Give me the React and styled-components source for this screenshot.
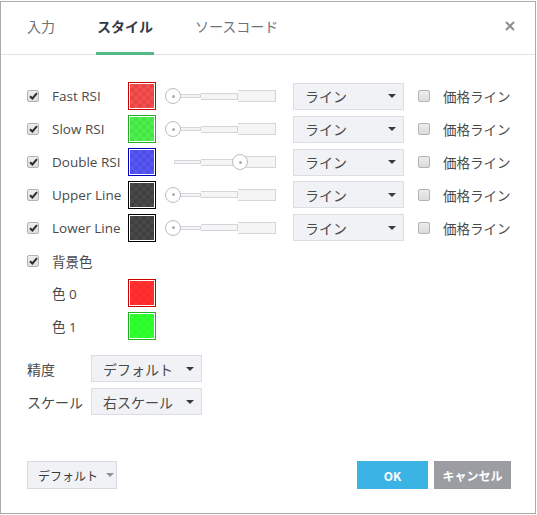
import React from "react";
import styled, { createGlobalStyle } from "styled-components";

const Global = createGlobalStyle`
  html, body { margin: 0; padding: 0; background: #fff; }
  body { font-family: "Open Sans", "Noto Sans CJK JP", sans-serif; }
  * { box-sizing: border-box; }
`;

const Dialog = styled.div`
  margin-top: 1px;
  width: 536px;
  height: 513px;
  border: 1px solid #ababab;
  background: #fff;
  display: flex;
  flex-direction: column;
  color: #4a4a4a;
`;

const Header = styled.div`
  height: 53px;
  border-bottom: 1px solid #e1e3e8;
  display: flex;
  align-items: stretch;
  padding-left: 25px;
  padding-right: 18px;
  gap: 40px;
`;

const Tab = styled.div`
  position: relative;
  display: flex;
  align-items: center;
  font-family: "Noto Sans CJK JP", sans-serif;
  font-size: 14px;
  font-weight: ${(p) => (p.$active ? 700 : 400)};
  color: ${(p) => (p.$active ? "#353845" : "#6e717a")};
  padding: 0 1px 3px;
  border-bottom: 3px solid ${(p) => (p.$active ? "#53b987" : "transparent")};
  margin-bottom: -1px;
`;

const Close = styled.div`
  margin-left: auto;
  display: flex;
  align-items: center;
  padding-bottom: 4px;
  padding-right: 2px;
`;

const Body = styled.div`
  padding: 25px 0 0 26px;
  display: flex;
  flex-direction: column;
`;

const Row = styled.div`
  height: 32.85px;
  display: flex;
  align-items: center;
`;

const CheckBox = styled.div`
  width: 12px;
  height: 12px;
  border: 1px solid #b3b3b3;
  border-radius: 2px;
  background: linear-gradient(#eeeeee, #dedede);
  display: flex;
  align-items: center;
  justify-content: center;
  flex: none;
`;

const Label = styled.div`
  font-size: 13.5px;
  color: #4a4a4a;
  width: ${(p) => p.$w || 76}px;
  margin-left: ${(p) => p.$ml ?? 13}px;
  white-space: nowrap;
  flex: none;
`;

const Swatch = styled.div`
  width: 28px;
  height: 28px;
  border: 1.5px solid ${(p) => p.$border};
  padding: 1px;
  background: #fff;
  flex: none;
  div {
    width: 100%;
    height: 100%;
    background-image: linear-gradient(${(p) => p.$fill}, ${(p) => p.$fill}),
      conic-gradient(#c8c8c8 25%, #ffffff 0 50%, #c8c8c8 0 75%, #ffffff 0);
    background-size: 100% 100%, 8px 8px;
  }
`;

const Slider = styled.div`
  position: relative;
  width: 111px;
  height: 16px;
  margin-left: 9px;
  padding-left: 9px;
  display: flex;
  align-items: center;
  flex: none;
`;

const Seg = styled.div`
  height: ${(p) => p.$h}px;
  width: ${(p) => (p.$w ? `${p.$w}px` : "auto")};
  flex: ${(p) => (p.$w ? "none" : "1")};
  background: #f5f5f6;
  border: 1px solid #d2d5da;
  border-left: ${(p) => (p.$first ? "1px solid #d2d5da" : "none")};
`;

const Thumb = styled.div`
  position: absolute;
  top: 0;
  width: 16px;
  height: 16px;
  border-radius: 50%;
  border: 1px solid #b9bcc4;
  background: #fff;
  display: flex;
  align-items: center;
  justify-content: center;
  &::after {
    content: "";
    width: 3px;
    height: 3px;
    border-radius: 50%;
    background: #a9adb6;
  }
`;

const Select = styled.div`
  width: ${(p) => p.$w || 111}px;
  height: 27px;
  margin-left: ${(p) => p.$ml ?? 17}px;
  background: #f1f2f6;
  border: 1px solid #dcdee3;
  display: flex;
  align-items: center;
  padding: 0 7px 0 11px;
  font-family: "Noto Sans CJK JP", sans-serif;
  font-size: 14px;
  color: #4a4a4a;
  flex: none;
  span { flex: 1; }
`;

const Arrow = styled.i`
  width: 0;
  height: 0;
  border-left: 4px solid transparent;
  border-right: 4px solid transparent;
  border-top: 4px solid ${(p) => p.$c || "#3a3a3a"};
`;

const PriceCheck = styled(CheckBox)`
  margin-left: 14px;
  background: linear-gradient(#ececec, #dcdcdc);
`;

const PriceLabel = styled.div`
  margin-left: 13px;
  font-family: "Noto Sans CJK JP", sans-serif;
  font-size: 13.5px;
  color: #4a4a4a;
  white-space: nowrap;
`;

const Indent = styled.div`
  width: 12px;
  flex: none;
`;

const Options = styled.div`
  margin-top: 13px;
  display: flex;
  flex-direction: column;
  gap: 7px;
`;

const OptRow = styled.div`
  display: flex;
  align-items: center;
  height: 26px;
`;

const OptLabel = styled.div`
  width: 64px;
  font-family: "Noto Sans CJK JP", sans-serif;
  font-size: 14px;
  color: #4a4a4a;
  flex: none;
`;

const Footer = styled.div`
  margin-top: auto;
  display: flex;
  align-items: center;
  padding: 0 24px 24px 26px;
  gap: 6px;
`;

const Button = styled.div`
  height: 28px;
  width: ${(p) => p.$w}px;
  display: flex;
  align-items: center;
  justify-content: center;
  font-family: "Noto Sans CJK JP", sans-serif;
  font-size: 12px;
  font-weight: 700;
  color: #fff;
  background: ${(p) => p.$bg};
`;

const DefaultButton = styled.div`
  height: 28px;
  width: 90px;
  display: flex;
  align-items: center;
  gap: 8px;
  padding-left: 10px;
  background: #f1f2f6;
  border: 1px solid #d7d9de;
  font-family: "Noto Sans CJK JP", sans-serif;
  font-size: 12px;
  color: #3a3a3a;
  margin-right: auto;
`;

const Check = () => (
  <svg width="9" height="8" viewBox="0 0 9 8">
    <path d="M1 4.2 L3.4 6.5 L8 1.2" fill="none" stroke="#2e2e2e" strokeWidth="2" />
  </svg>
);

const rows = [
  { name: "Fast RSI", border: "#cc0000", fill: "rgba(240,40,40,0.82)", thumb: 0 },
  { name: "Slow RSI", border: "#22b022", fill: "rgba(40,235,40,0.82)", thumb: 0 },
  { name: "Double RSI", border: "#0000c0", fill: "rgba(50,50,240,0.82)", thumb: 67 },
  { name: "Upper Line", border: "#000", fill: "rgba(40,40,40,0.85)", thumb: 0 },
  { name: "Lower Line", border: "#000", fill: "rgba(40,40,40,0.85)", thumb: 0 },
];

export default function App() {
  return (
    <>
      <Global />
      <Dialog>
        <Header>
          <Tab>入力</Tab>
          <Tab $active>スタイル</Tab>
          <Tab>ソースコード</Tab>
          <Close>
            <svg width="10" height="10" viewBox="0 0 10 10">
              <path d="M1 1 L9 9 M9 1 L1 9" stroke="#8d8f96" strokeWidth="2" />
            </svg>
          </Close>
        </Header>
        <Body>
          {rows.map((r) => (
            <Row key={r.name}>
              <CheckBox><Check /></CheckBox>
              <Label>{r.name}</Label>
              <Swatch $border={r.border} $fill={r.fill}><div /></Swatch>
              <Slider>
                <Seg $first $w={27} $h={4} />
                <Seg $w={37} $h={7} />
                <Seg $h={12} />
                <Thumb style={{ left: r.thumb }} />
              </Slider>
              <Select>
                <span>ライン</span>
                <Arrow />
              </Select>
              <PriceCheck />
              <PriceLabel>価格ライン</PriceLabel>
            </Row>
          ))}
          <Row>
            <CheckBox><Check /></CheckBox>
            <Label>背景色</Label>
          </Row>
          <Row>
            <Indent />
            <Label>色 0</Label>
            <Swatch $border="#cc0000" $fill="rgba(255,30,30,0.92)"><div /></Swatch>
          </Row>
          <Row>
            <Indent />
            <Label>色 1</Label>
            <Swatch $border="#22b022" $fill="rgba(30,255,30,0.92)"><div /></Swatch>
          </Row>
          <Options>
            <OptRow>
              <OptLabel>精度</OptLabel>
              <Select $ml={0}>
                <span>デフォルト</span>
                <Arrow />
              </Select>
            </OptRow>
            <OptRow>
              <OptLabel>スケール</OptLabel>
              <Select $ml={0}>
                <span>右スケール</span>
                <Arrow />
              </Select>
            </OptRow>
          </Options>
        </Body>
        <Footer>
          <DefaultButton>
            デフォルト
            <Arrow $c="#8e9097" />
          </DefaultButton>
          <Button $w={71} $bg="#3bb3e4">OK</Button>
          <Button $w={77} $bg="#9b9da3">キャンセル</Button>
        </Footer>
      </Dialog>
    </>
  );
}
